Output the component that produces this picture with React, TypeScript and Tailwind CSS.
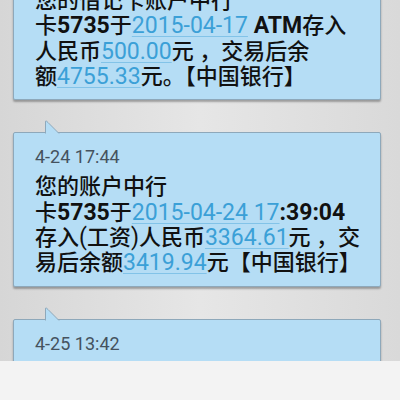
import React from "react";

const B = ({ children }: { children: React.ReactNode }) => (
  <span className="text-[23px] font-bold">{children}</span>
);
const N = ({ children }: { children: React.ReactNode }) => (
  <span className="text-[23px] font-normal">{children}</span>
);
const L = ({ children }: { children: React.ReactNode }) => (
  <span className="text-[23px] font-normal text-[#3ba0d7] underline decoration-[#82c3e8] decoration-1 underline-offset-[3px]">
    {children}
  </span>
);

const Line = ({ children }: { children: React.ReactNode }) => (
  <div className="h-[25.33px] leading-[25.33px] whitespace-nowrap">{children}</div>
);

const Bubble = ({
  time,
  children,
  extraClass = "",
}: {
  time: string;
  children: React.ReactNode;
  extraClass?: string;
}) => (
  <div
    className={`relative shrink-0 rounded-[2px] border border-[#8ea8ba] bg-[#b5ddf5] pl-[21px] pr-3 pt-[12px] pb-[10px] shadow-[0_2px_2px_rgba(0,0,0,0.3)] ${extraClass}`}
  >
    <svg
      className="absolute -top-[13px] left-[30px]"
      width="16"
      height="15"
      viewBox="0 0 16 15"
    >
      <path d="M1.5 15 V1.2 Q2.5 0.5 4 2.5 L15 13.5 V15 Z" fill="#b5ddf5" />
      <path
        d="M1.5 13.5 V1.2 Q2.5 0.5 4 2.5 L15 13.5"
        fill="none"
        stroke="#8ea8ba"
        strokeWidth="1"
      />
    </svg>
    <div className="h-[24px] text-[18px] leading-[24px] text-[#45525e]">{time}</div>
    <div className="mt-[5px] text-[22px] font-medium text-[#111111]">{children}</div>
  </div>
);

export default function App() {
  return (
    <div className="flex h-[400px] w-[400px] flex-col overflow-hidden font-[Roboto,'Noto_Sans_CJK_SC',sans-serif]">
      <div className="flex min-h-0 flex-1 flex-col gap-[32px] overflow-hidden bg-[linear-gradient(to_right,#d6d6d6,#e6e6e6_50%,#d9d9d9)] pl-[13px] pr-[19px]">
        <Bubble time="4-17 09:12" extraClass="-mt-[54px]">
          <Line>您的借记卡账户中行</Line>
          <Line>
            卡<B>5735</B>于<L>2015-04-17</L>
            <N> </N>
            <B>ATM</B>存入
          </Line>
          <Line>
            人民币<L>500.00</L>元 ，交易后余
          </Line>
          <Line>
            额<L>4755.33</L>元。【中国银行】
          </Line>
        </Bubble>
        <Bubble time="4-24 17:44">
          <Line>您的账户中行</Line>
          <Line>
            卡<B>5735</B>于<L>2015-04-24 17</L>
            <B>:39:04</B>
          </Line>
          <Line>
            存入<N>(</N>工资<N>)</N>人民币<L>3364.61</L>元 ，交
          </Line>
          <Line>
            易后余额<L>3419.94</L>元【中国银行】
          </Line>
        </Bubble>
        <Bubble time="4-25 13:42">
          <Line>您的账户中行</Line>
          <Line>
            卡<B>5735</B>于<L>2015-04-25 13</L>
            <B>:40:11</B>
          </Line>
        </Bubble>
      </div>
      <div className="h-[39px] shrink-0 bg-[#f3f3f3]" />
    </div>
  );
}
